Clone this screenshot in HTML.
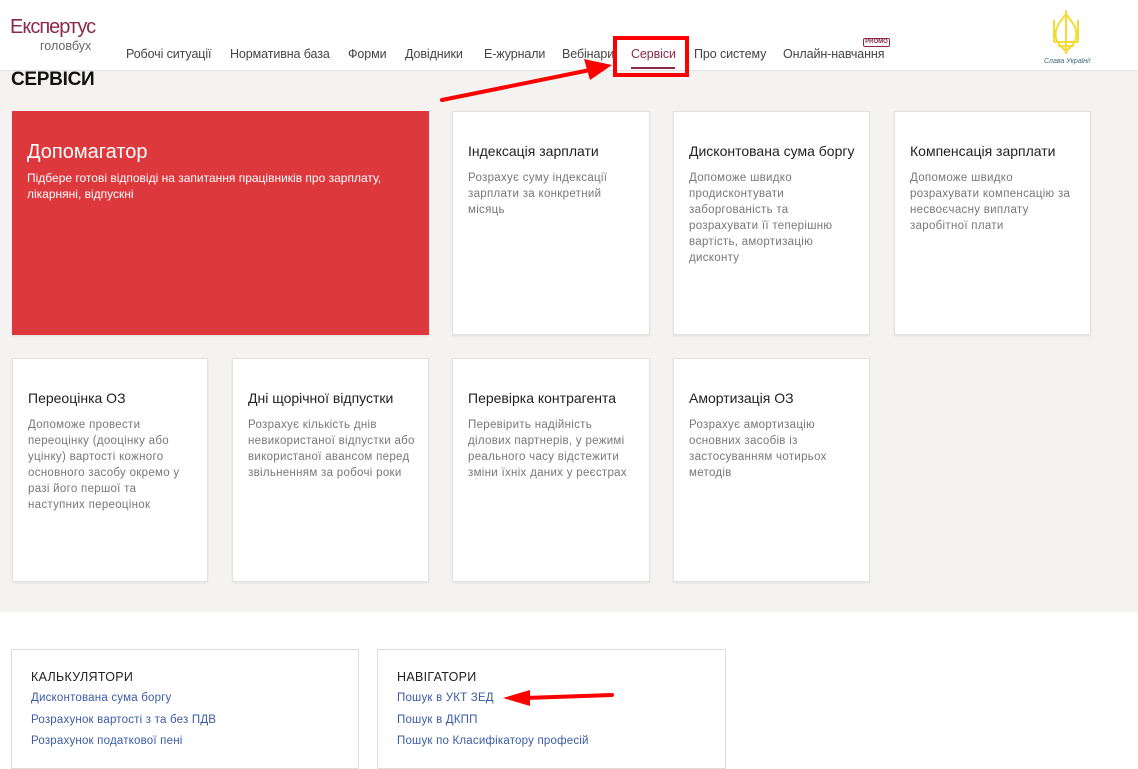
<!DOCTYPE html>
<html><head><meta charset="utf-8"><style>
*{margin:0;padding:0;box-sizing:border-box}
body{width:1138px;height:755px;overflow:hidden;background:#fff;font-family:"Liberation Sans",sans-serif;position:relative}
.hdr{position:absolute;left:0;top:0;width:1138px;height:71px;background:#fff;border-bottom:1px solid #e2e2e2}
.logo1{position:absolute;left:10px;top:16px;font-size:20px;color:#8b2a48;letter-spacing:-1px}
.logo2{position:absolute;left:40px;top:39px;font-size:12.5px;color:#666}
.nav{position:absolute;top:47px;font-size:12.5px;color:#444;white-space:nowrap;letter-spacing:-0.1px}
.gray{position:absolute;left:0;top:71px;width:1138px;height:541px;background:#f4f3f2}
h1{position:absolute;left:11px;top:69px;font-size:19px;font-weight:bold;color:#111;letter-spacing:-0.3px}
.card{position:absolute;background:#fff;border:1px solid #e3e3e3;box-shadow:0 1px 2px rgba(0,0,0,.08)}
.card .t{position:absolute;left:15px;top:31px;font-size:14px;color:#222;white-space:nowrap}
.card .d{position:absolute;left:15px;top:58px;right:20px;font-size:11.5px;line-height:16px;color:#777;letter-spacing:0.3px}
.red{background:#dd383c;border:none}
.red .t{font-size:20px;color:#fff;top:30px}
.red .d{color:#fff;top:59px;font-size:12px;letter-spacing:0}
.box{position:absolute;top:649px;height:120px;border:1px solid #ddd;background:#fff}
.box .h{position:absolute;left:19px;top:20px;font-size:12.5px;color:#222;letter-spacing:0.3px}
.box a{position:absolute;left:19px;font-size:11.5px;color:#3b5aa5;text-decoration:none;letter-spacing:0.2px;white-space:nowrap}
</style></head><body>
<div class="gray"></div>
<div class="hdr">
<div class="logo1">Експертус</div>
<div class="logo2">головбух</div>
<div class="nav" style="left:126px">Робочі ситуації</div>
<div class="nav" style="left:230px">Нормативна база</div>
<div class="nav" style="left:348px">Форми</div>
<div class="nav" style="left:405px">Довідники</div>
<div class="nav" style="left:484px">Е-журнали</div>
<div class="nav" style="left:562px">Вебінари</div>
<div class="nav" style="left:631px;color:#8b2a48">Сервіси</div>
<div style="position:absolute;left:631px;top:67px;width:44px;height:2px;background:#8b2a48"></div>
<div class="nav" style="left:694px">Про систему</div>
<div class="nav" style="left:783px">Онлайн-навчання</div>
<div style="position:absolute;left:863px;top:38px;width:27px;height:9px;border:1px solid #8b2a48;border-radius:2px;font-size:6px;font-weight:bold;color:#8b2a48;text-align:center;line-height:7px">PROMO</div>
<svg style="position:absolute;left:1048px;top:8px" width="36" height="50" viewBox="0 0 36 50"><path d="M18 2 L18 46 M18 6 C12 14 6 20 8 30 C10 38 16 40 18 44 C20 40 26 38 28 30 C30 20 24 14 18 6 M6 12 L6 34 M30 12 L30 34 M6 34 L30 34 M10 38 L26 38" stroke="#f2dc38" stroke-width="2" fill="none"/></svg>
<div style="position:absolute;left:1044px;top:58px;font-size:7px;font-style:italic;color:#3a6a7a">Слава Україні!</div>
</div>
<h1>СЕРВІСИ</h1>

<div class="card red" style="left:12px;top:111px;width:417px;height:224px"><div class="t">Допомагатор</div><div class="d">Підбере готові відповіді на запитання працівників про зарплату, лікарняні, відпускні</div></div>
<div class="card" style="left:452px;top:111px;width:198px;height:224px"><div class="t">Індексація зарплати</div><div class="d">Розрахує суму індексації зарплати за конкретний місяць</div></div>
<div class="card" style="left:673px;top:111px;width:197px;height:224px"><div class="t">Дисконтована сума боргу</div><div class="d">Допоможе швидко продисконтувати заборгованість та розрахувати її теперішню вартість, амортизацію дисконту</div></div>
<div class="card" style="left:894px;top:111px;width:197px;height:224px"><div class="t">Компенсація зарплати</div><div class="d" style="right:8px">Допоможе швидко розрахувати компенсацію за несвоєчасну виплату заробітної плати</div></div>

<div class="card" style="left:12px;top:358px;width:196px;height:224px"><div class="t">Переоцінка ОЗ</div><div class="d">Допоможе провести переоцінку (дооцінку або уцінку) вартості кожного основного засобу окремо у разі його першої та наступних переоцінок</div></div>
<div class="card" style="left:232px;top:358px;width:197px;height:224px"><div class="t">Дні щорічної відпустки</div><div class="d" style="right:10px">Розрахує кількість днів невикористаної відпустки або використаної авансом перед звільненням за робочі роки</div></div>
<div class="card" style="left:452px;top:358px;width:198px;height:224px"><div class="t">Перевірка контрагента</div><div class="d">Перевірить надійність ділових партнерів, у режимі реального часу відстежити зміни їхніх даних у реєстрах</div></div>
<div class="card" style="left:673px;top:358px;width:197px;height:224px"><div class="t">Амортизація ОЗ</div><div class="d">Розрахує амортизацію основних засобів із застосуванням чотирьох методів</div></div>

<div class="box" style="left:11px;width:348px"><div class="h">КАЛЬКУЛЯТОРИ</div>
<a style="top:42px">Дисконтована сума боргу</a><a style="top:64px">Розрахунок вартості з та без ПДВ</a><a style="top:85px">Розрахунок податкової пені</a></div>
<div class="box" style="left:377px;width:349px"><div class="h">НАВІГАТОРИ</div>
<a style="top:42px">Пошук в УКТ ЗЕД</a><a style="top:64px">Пошук в ДКПП</a><a style="top:85px">Пошук по Класифікатору професій</a></div>

<svg style="position:absolute;left:0;top:0" width="1138" height="755">
<rect x="615" y="38" width="72" height="37" fill="none" stroke="#f00" stroke-width="4"/>
<line x1="442" y1="100" x2="590" y2="70" stroke="#f00" stroke-width="4" stroke-linecap="round"/>
<polygon points="612,65 584,59 590,80" fill="#f00"/>
<line x1="612" y1="695" x2="525" y2="698" stroke="#f00" stroke-width="4" stroke-linecap="round"/>
<polygon points="503,698 530,690 530,706" fill="#f00"/>
</svg>
</body></html>
